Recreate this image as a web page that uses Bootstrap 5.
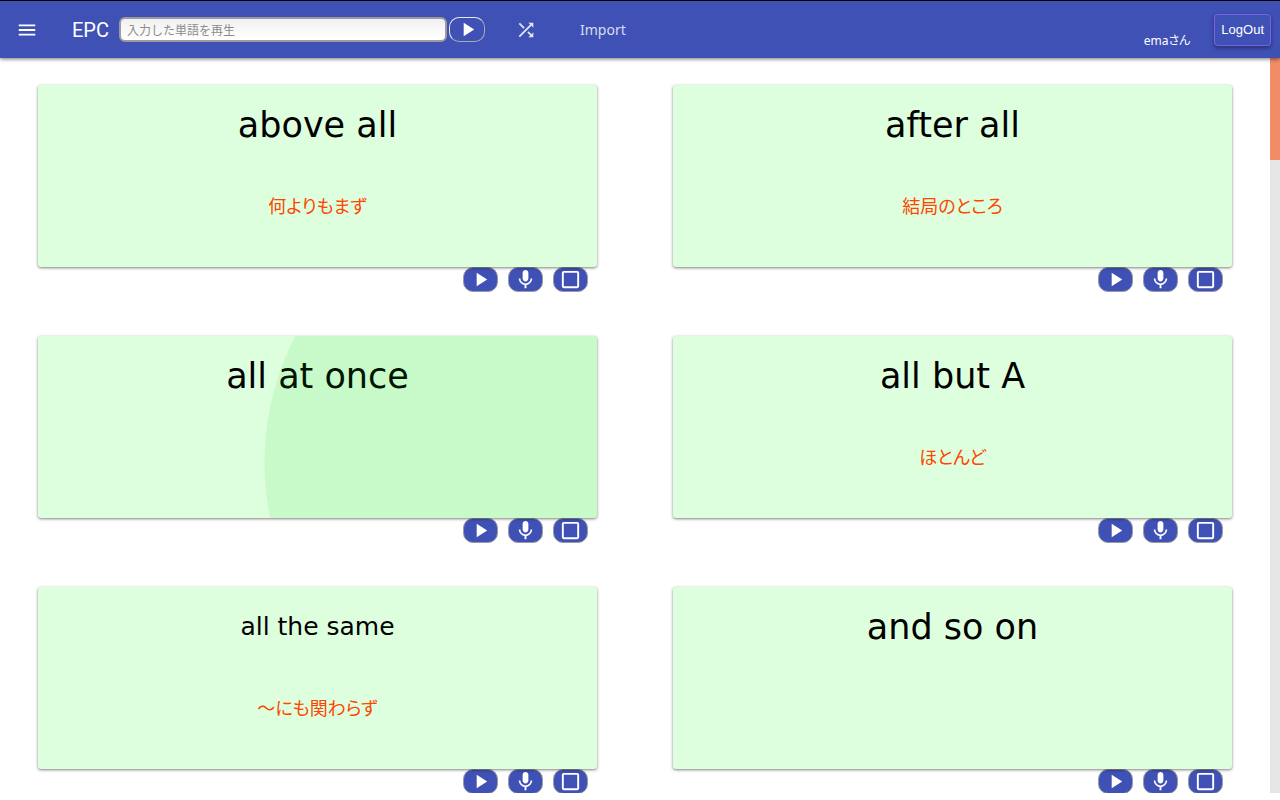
<!DOCTYPE html>
<html lang="ja">
<head>
<meta charset="utf-8">
<meta name="viewport" content="width=device-width, initial-scale=1">
<title>EPC</title>
<link href="https://cdn.jsdelivr.net/npm/bootstrap@5.3.0/dist/css/bootstrap.min.css" rel="stylesheet">
<style>
  body { font-family: "Noto Sans", "Noto Sans CJK JP", sans-serif; background: #fff; color: #000; }
  .shell { padding-bottom: 7px; }
  .topbar { background: #3f51b5; border-top: 1px solid #000; height: 58px; padding: 0 9px 0 16px; box-shadow: 0 1px 4px rgba(0,0,0,.55); z-index: 2; color: #fff; }
  .brand { font: 20px/24px "Roboto", sans-serif; margin: 0 10px 0 34px; }
  .iconbtn { width: 22px; height: 22px; }
  .shuffle { margin-left: 30px; }
  .word { width: 328px; height: 25px; border: 2px solid #9a9a9f; border-radius: 6px; padding: 2px 6px 0; font-size: 12px; line-height: 20px; background: linear-gradient(#f1f1f1, #fff); box-shadow: none; }
  .word::placeholder { color: #8c8c8c; opacity: 1; }
  .pill { height: 25px; border: 1px solid #9a9aa5; border-radius: 10px; background: #3f51b5; padding: 0; width: 35px; }
  .pill-light { width: 36px; border-color: #e8e8f0 #a9a9b0 #a9a9b0 #e8e8f0; margin-left: 2px; }
  .pill svg, .iconbtn svg { display: block; }
  .navlink { font-size: 14px; line-height: 20px; color: #d9dcf0; margin-left: 43px; }
  .user { font-size: 12px; line-height: 18px; margin: 22px 24px 0 0; font-feature-settings: "palt"; }
  .logout { font: 13px/20px "Liberation Sans", sans-serif; color: #fff; border: 1px solid #7b61e8; border-radius: 4px; padding: 5px 6px; box-shadow: 0 2px 4px rgba(0,0,0,.4); }
  .words { padding-top: 27px; }
  .cell { padding: 0 38px; height: 251px; }
  .phrase { height: 182px; border: 0; border-radius: 3px; background: #dfd; box-shadow: 0 1px 3px rgba(0,0,0,.5); padding: 16px 0 0; }
  .phrase strong { font: 35px/48px "DejaVu Sans", sans-serif; height: 90px; color: #000; }
  .phrase strong.long { font-size: 25px; }
  .phrase span { font: 18px/28px "Noto Sans CJK JP", sans-serif; font-feature-settings: "palt"; color: #ff4500; }
  .ripple::after { content: ""; position: absolute; inset: 0; background: radial-gradient(circle 272px at 498px 126px, rgba(20,200,20,.1) 271px, transparent 272px); }
  .tools { gap: 10px; padding-right: 9px; }
  .track { width: 10px; background: #e6e6e6; }
  .thumb { height: 102px; background: #f08c68; }
</style>
</head>
<body>
<svg class="d-none">
  <symbol id="play" viewBox="0 0 24 24"><path fill="#fff" d="M8 5v14l11-7z"/></symbol>
  <symbol id="mic" viewBox="0 0 24 24"><path fill="#fff" d="M12 14c1.660 0 3-1.340 3-3V5c0-1.660-1.340-3-3-3S9 3.340 9 5v6c0 1.660 1.340 3 3 3zm5.300-3c0 3-2.540 5.100-5.300 5.100S6.700 14 6.700 11H5c0 3.410 2.720 6.230 6 6.720V21h2v-3.280c3.280-.48 6-3.300 6-6.720h-1.700z"/></symbol>
  <symbol id="box" viewBox="0 0 24 24"><path fill="#fff" d="M19 5v14H5V5h14m0-2H5c-1.100 0-2 .9-2 2v14c0 1.100.9 2 2 2h14c1.100 0 2-.9 2-2V5c0-1.100-.9-2-2-2z"/></symbol>
</svg>
<div class="shell vh-100 d-flex flex-column overflow-hidden">
  <header class="topbar d-flex align-items-center flex-shrink-0 position-relative">
    <button class="iconbtn btn p-0 border-0" aria-label="Menu"><svg width="22" height="22" viewBox="0 0 24 24"><path fill="#fff" d="M3 18h18v-2H3v2zm0-5h18v-2H3v2zm0-7v2h18V6H3z"/></svg></button>
    <div class="brand">EPC</div>
    <input class="word form-control" type="text" aria-label="単語" placeholder="入力した単語を再生">
    <button class="pill pill-light d-flex align-items-center justify-content-center" aria-label="再生"><svg width="23" height="23"><use href="#play"/></svg></button>
    <button class="iconbtn shuffle btn p-0 border-0" aria-label="Shuffle"><svg width="22" height="22" viewBox="0 0 24 24"><path fill="#e1e4f4" d="M10.590 9.170L5.410 4 4 5.410l5.170 5.170 1.420-1.410zM14.500 4l2.040 2.040L4 18.590 5.410 20 17.960 7.460 20 9.500V4h-5.500zm.33 9.410l-1.410 1.410 3.130 3.130L14.500 20H20v-5.500l-2.040 2.040-3.130-3.130z"/></svg></button>
    <a href="#" class="navlink text-decoration-none">Import</a>
    <div class="user ms-auto">emaさん</div>
    <button class="logout btn">LogOut</button>
  </header>
  <div class="d-flex flex-grow-1 overflow-hidden">
    <main class="words flex-grow-1 overflow-hidden">
      <div class="row g-0" id="list"></div>
    </main>
    <div class="track flex-shrink-0"><div class="thumb"></div></div>
  </div>
</div>
<script src="https://cdn.jsdelivr.net/npm/bootstrap@5.3.0/dist/js/bootstrap.bundle.min.js"></script>
<script>
  const words = [
    ["above all", "何よりもまず"], ["after all", "結局のところ"],
    ["all at once", "", "ripple"], ["all but A", "ほとんど"],
    ["all the same", "〜にも関わらず"], ["and so on", ""]
  ];
  const tool = (id, label) => `<button class="pill d-flex align-items-center justify-content-center" aria-label="${label}"><svg width="23" height="23"><use href="#${id}"/></svg></button>`;
  document.getElementById("list").innerHTML = words.map(([en, ja, state = ""]) => `
    <div class="col-6 cell">
      <button class="phrase w-100 d-flex flex-column align-items-center justify-content-start position-relative overflow-hidden ${state}"><strong class="${en.length > 11 ? "long" : ""}">${en}</strong><span>${ja}</span></button>
      <div class="tools d-flex justify-content-end">${tool("play", "再生")}${tool("mic", "録音")}${tool("box", "選択")}</div>
    </div>`).join("");
</script>
</body>
</html>
